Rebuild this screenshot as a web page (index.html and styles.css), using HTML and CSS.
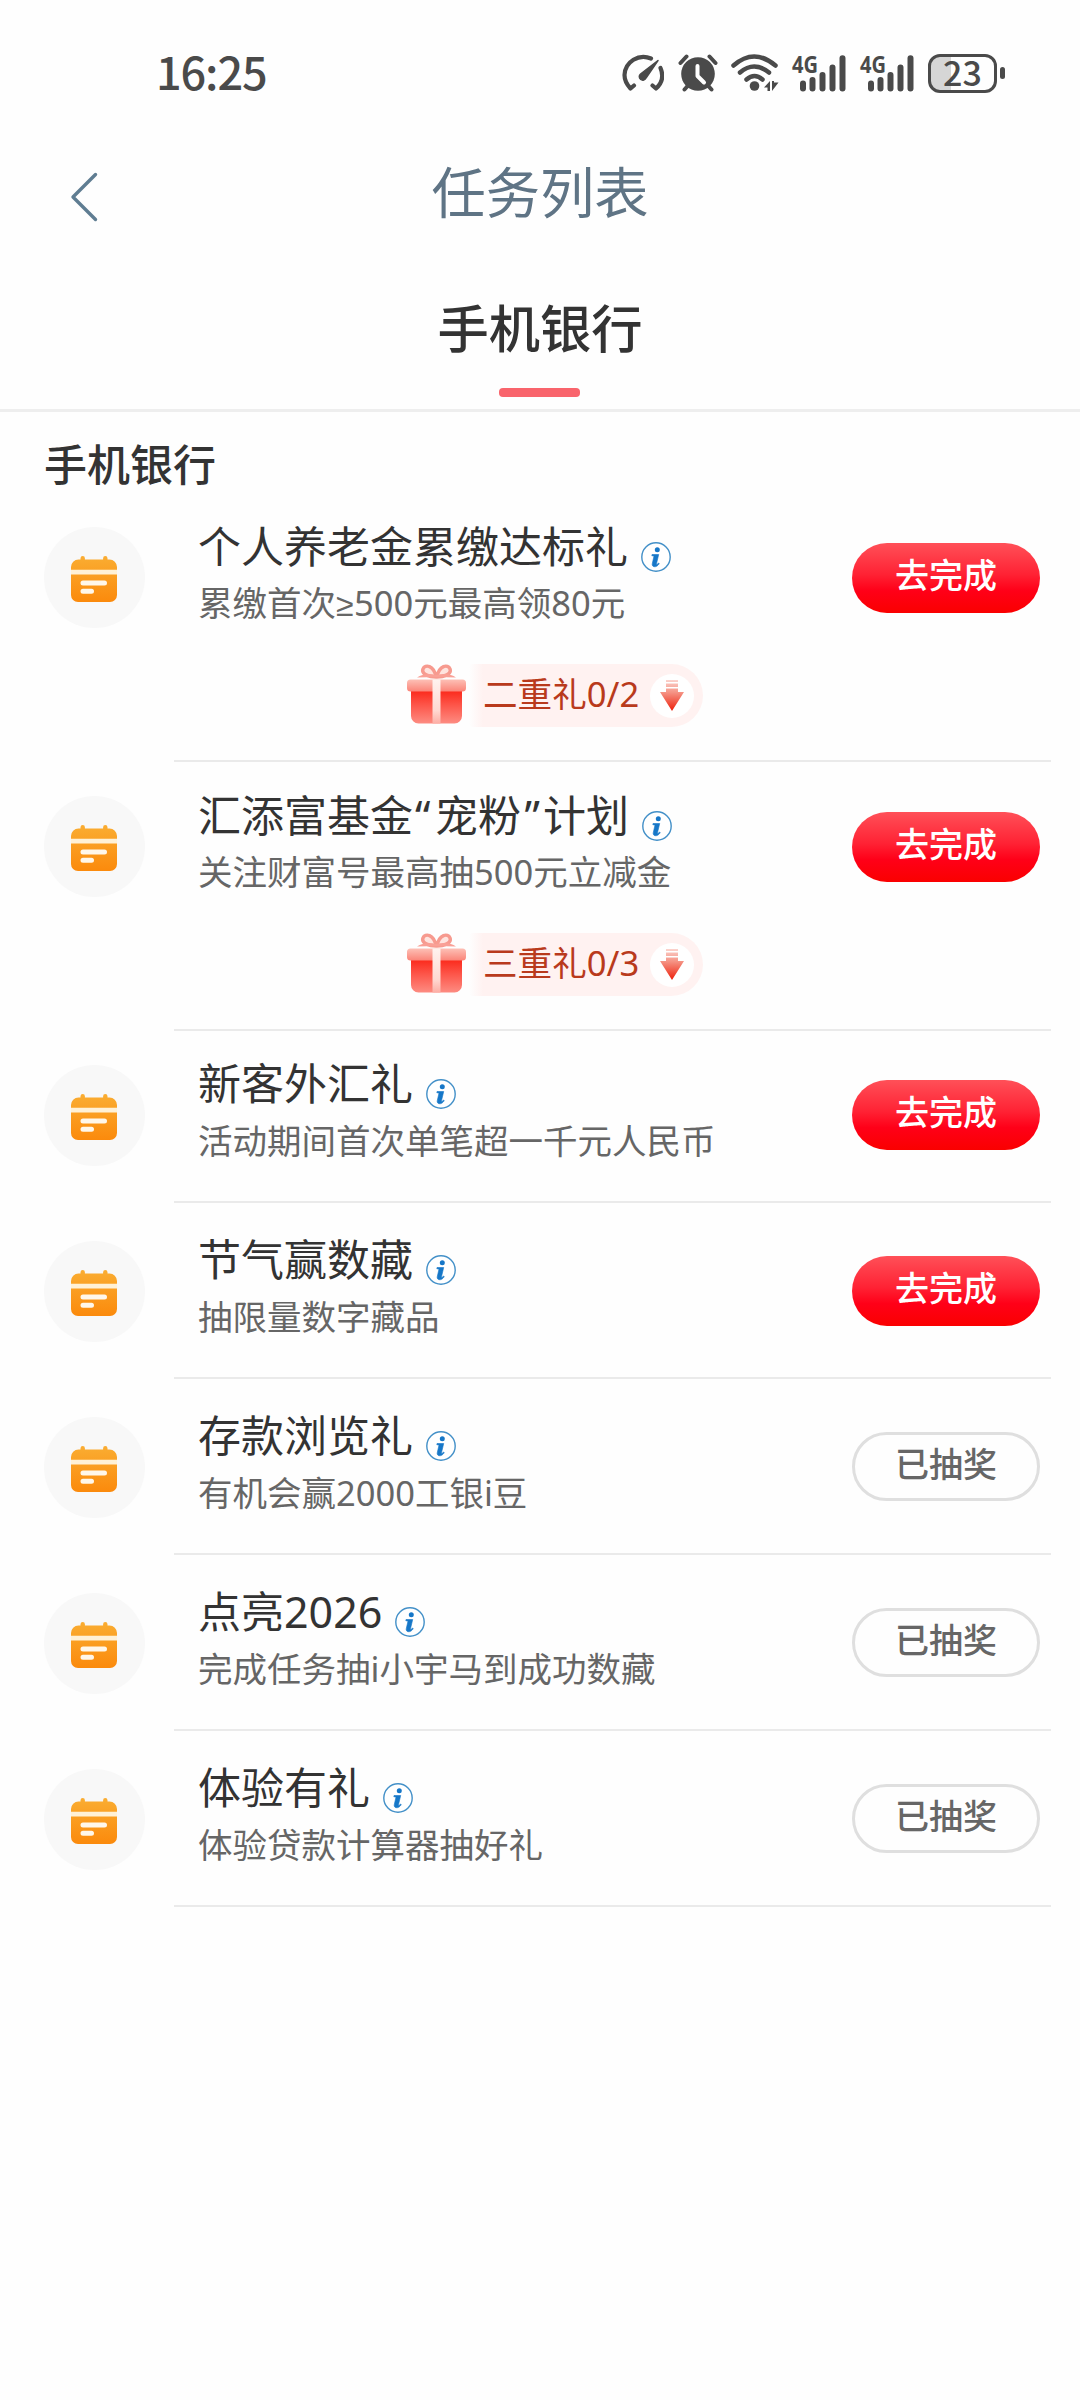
FILE: index.html
```html
<!DOCTYPE html>
<html lang="zh-CN">
<head>
<meta charset="utf-8">
<title>任务列表</title>
<link rel="stylesheet" href="styles.css">
</head>
<body>
<svg class="sprite" width="0" height="0" aria-hidden="true">
  <defs>
    <linearGradient id="orange" x1="0" y1="0" x2="0" y2="1"><stop offset="0" stop-color="#faad32"/><stop offset="1" stop-color="#fb8a0c"/></linearGradient>
    <linearGradient id="box" x1="0" y1="0" x2="0" y2="1"><stop offset="0" stop-color="#fb2416"/><stop offset=".45" stop-color="#fd5448"/><stop offset="1" stop-color="#fd8c82"/></linearGradient>
    <linearGradient id="lid" x1="0" y1="0" x2="0" y2="1"><stop offset="0" stop-color="#fdc0b6"/><stop offset="1" stop-color="#fb8478"/></linearGradient>
    <linearGradient id="ribbon" x1="0" y1="0" x2="0" y2="1"><stop offset="0" stop-color="#fff3ef"/><stop offset=".7" stop-color="#ffd9d2"/><stop offset="1" stop-color="#fdaea5"/></linearGradient>
    <linearGradient id="arrow" gradientUnits="userSpaceOnUse" x1="0" y1="0" x2="0" y2="31"><stop offset="0" stop-color="#fbd3cd"/><stop offset=".4" stop-color="#f59384"/><stop offset="1" stop-color="#ee1f0a"/></linearGradient>
  </defs>
  <symbol id="calendar" viewBox="0 0 46 46">
    <path d="M9.500 3.500V2.200a2.200 2.200 0 0 1 4.400 0V3.500h18.200V2.200a2.200 2.200 0 0 1 4.400 0V3.500h2A7.500 7.500 0 0 1 46 11V39a7 7 0 0 1-7 7H7a7 7 0 0 1-7-7V11A7.500 7.500 0 0 1 7.500 3.500Z" fill="url(#orange)"/>
    <path d="M0 13.800h46v4.600H0Z" fill="#fff1d6"/>
    <path d="M12 27h21.500M12 35.300h8.500" stroke="#fff7ea" stroke-width="5" stroke-linecap="round"/>
  </symbol>
  <symbol id="info" viewBox="0 0 30 30">
    <circle cx="15" cy="15" r="14.200" fill="#fff" stroke="#4390c8" stroke-width="1.400"/>
    <circle cx="16.300" cy="7.800" r="2.500" fill="#1677c8"/>
    <path d="M11 12.500h6.700l-2.200 9.300c-.2 1 .7 1 2-.8l.8.6c-1.700 2.600-3.300 3.300-4.900 3.100-1.900-.2-2.500-1.500-2.100-3.300l1.700-7.400-2.200-.3Z" fill="#1677c8" stroke="#1677c8" stroke-width=".6"/>
  </symbol>
  <symbol id="gift" viewBox="0 0 59 60">
    <path d="M29 13C22 13 14 10 16 5 18 0 27 1 29 13ZM30 13c7 0 15-3 13-8C41 0 32 1 30 13Z" fill="#ffe4df" stroke="#f79a8f" stroke-width="3.400"/>
    <path d="M29 13 10 13.500Q18 8 29 11 42 8 49 13.500Z" fill="#f9a096"/>
    <path d="M4 25h51v27a7.500 7.500 0 0 1-7.500 7.500h-36A7.500 7.500 0 0 1 4 52Z" fill="url(#box)"/>
    <rect x="0" y="15.500" width="59" height="12" rx="3.500" fill="url(#lid)"/>
    <path d="M25.500 15.500h8v44h-8Z" fill="url(#ribbon)"/>
  </symbol>
  <symbol id="down" viewBox="0 0 24 31">
    <path d="M6 0h12v2H6ZM6 3.500h12v3.500H6ZM6 8.500h12V12h6L12 31 0 12h6Z" fill="url(#arrow)"/>
  </symbol>
</svg>

<header class="status">
  <span class="clock">16:25</span>
  <div class="status-icons">
    <svg class="ic-gauge" viewBox="0 0 42 38" fill="none" stroke="#4a4a4a" stroke-width="4.200" stroke-linecap="round" stroke-linejoin="round"><path d="M29 4.500A19 19 0 0 0 2.500 21Q2.500 28 8.500 34.500L12 31.500"/><path d="M38.500 14Q43.500 26 34 34.500L30.500 31.500"/><path d="M36 6.500 24 24a3.500 3.500 0 1 1-5.500-4Z" fill="#4a4a4a" stroke-width="1.500"/></svg>
    <svg class="ic-alarm" viewBox="0 0 40 38"><circle cx="20" cy="20" r="16.800" fill="#4a4a4a"/><path d="m2.500 9 6-6.500M37.500 9l-6-6.500M6.500 35.500l4-4.500M33.500 35.500l-4-4.500" stroke="#4a4a4a" stroke-width="4" stroke-linecap="round"/><path d="M19.500 12v10l6.500 6.500" fill="none" stroke="#fff" stroke-width="4" stroke-linecap="round" stroke-linejoin="round"/></svg>
    <svg class="ic-wifi" viewBox="0 0 48 38" fill="none" stroke="#4a4a4a" stroke-width="4.500" stroke-linecap="round"><path d="M2.500 11.500Q23 -6.500 44.500 11.500M9 18.500Q23 6.500 38 18.500M15.500 25.500Q23.500 18.500 31.500 25.500"/><circle cx="23.500" cy="32" r="4.800" fill="#4a4a4a" stroke="none"/><path d="M33 33.500 39 27v10h-2.500v-3.500ZM41 27h2v1.500h4.500L41 37Z" fill="#4a4a4a" stroke="none"/></svg>
    <svg class="ic-signal" viewBox="0 0 54 37"><text x="0" y="17.500" class="net" textLength="26" lengthAdjust="spacingAndGlyphs">4G</text><path d="M11 28.500v5M20.500 25v8.500M30.500 20v13.500M40.500 12.500v21M50.500 3.200v30.300" stroke="#4a4a4a" stroke-width="6" stroke-linecap="round"/></svg>
    <svg class="ic-signal" viewBox="0 0 54 37"><text x="0" y="17.500" class="net" textLength="26" lengthAdjust="spacingAndGlyphs">4G</text><path d="M11 28.500v5M20.500 25v8.500M30.500 20v13.500M40.500 12.500v21M50.500 3.200v30.300" stroke="#4a4a4a" stroke-width="6" stroke-linecap="round"/></svg>
    <div class="battery"><span class="cell">23</span><i class="nub"></i></div>
  </div>
</header>

<nav class="titlebar">
  <svg class="back" viewBox="0 0 28 50"><path d="M25.500 2.500 3 25l22.500 22.500" fill="none" stroke="#5f7d92" stroke-width="3.400" stroke-linecap="round" stroke-linejoin="round"/></svg>
  <h1>任务列表</h1>
</nav>

<div class="tabs"><div class="tab">手机银行</div></div>

<main>
  <h2>手机银行</h2>
  <ul class="tasks">
    <li class="task task-bonus">
      <div class="badge"><svg><use href="#calendar"/></svg></div>
      <div class="body">
        <h3>个人养老金累缴达标礼<svg><use href="#info"/></svg></h3>
        <p>累缴首次<span class="math">≥</span>500元最高领80元</p>
      </div>
      <button class="btn go">去完成</button>
      <div class="bonus"><svg class="gift"><use href="#gift"/></svg><div class="pill">二重礼0/2<span class="drop"><svg><use href="#down"/></svg></span></div></div>
    </li>
    <li class="task task-bonus">
      <div class="badge"><svg><use href="#calendar"/></svg></div>
      <div class="body">
        <h3>汇添富基金<span class="quote">“</span>宠粉<span class="quote close">”</span>计划<svg><use href="#info"/></svg></h3>
        <p>关注财富号最高抽500元立减金</p>
      </div>
      <button class="btn go">去完成</button>
      <div class="bonus"><svg class="gift"><use href="#gift"/></svg><div class="pill">三重礼0/3<span class="drop"><svg><use href="#down"/></svg></span></div></div>
    </li>
    <li class="task">
      <div class="badge"><svg><use href="#calendar"/></svg></div>
      <div class="body">
        <h3>新客外汇礼<svg><use href="#info"/></svg></h3>
        <p>活动期间首次单笔超一千元人民币</p>
      </div>
      <button class="btn go">去完成</button>
    </li>
    <li class="task">
      <div class="badge"><svg><use href="#calendar"/></svg></div>
      <div class="body">
        <h3>节气赢数藏<svg><use href="#info"/></svg></h3>
        <p>抽限量数字藏品</p>
      </div>
      <button class="btn go">去完成</button>
    </li>
    <li class="task">
      <div class="badge"><svg><use href="#calendar"/></svg></div>
      <div class="body">
        <h3>存款浏览礼<svg><use href="#info"/></svg></h3>
        <p>有机会赢2000工银i豆</p>
      </div>
      <button class="btn done">已抽奖</button>
    </li>
    <li class="task">
      <div class="badge"><svg><use href="#calendar"/></svg></div>
      <div class="body">
        <h3>点亮2026<svg><use href="#info"/></svg></h3>
        <p>完成任务抽i小宇马到成功数藏</p>
      </div>
      <button class="btn done">已抽奖</button>
    </li>
    <li class="task">
      <div class="badge"><svg><use href="#calendar"/></svg></div>
      <div class="body">
        <h3>体验有礼<svg><use href="#info"/></svg></h3>
        <p>体验贷款计算器抽好礼</p>
      </div>
      <button class="btn done">已抽奖</button>
    </li>
  </ul>
</main>
</body>
</html>
```
FILE: styles.css
```css
* { box-sizing: border-box; margin: 0; padding: 0; }
body {
  width: 1080px;
  min-height: 2400px;
  background: #fefefe;
  color: #333;
  font-family: "Noto Sans", "Noto Sans CJK SC", sans-serif;
}
svg { display: block; flex: none; }
.sprite { position: absolute; }

/* status bar */
.status { display: flex; justify-content: space-between; height: 146px; padding: 0 75px 0 156px; align-items: center; }
.clock { padding-bottom: 4px; font: 500 45px/60px "Noto Sans CJK SC", sans-serif; letter-spacing: -1.100px; color: #4a4a4a; }
.status-icons { display: flex; align-items: center; }
.ic-gauge { width: 42px; height: 38px; margin-right: 14px; }
.ic-alarm { width: 40px; height: 38px; margin-right: 13px; }
.ic-wifi { width: 48px; height: 38px; margin-right: 13px; }
.ic-signal { width: 54px; height: 37px; margin-right: 14px; overflow: visible; }
.net { font: 700 24px "Noto Sans", sans-serif; fill: #4a4a4a; }
.battery { display: flex; align-items: center; gap: 3px; }
.cell {
  width: 69px; height: 39px; border: 3px solid #4a4a4a; border-radius: 12px;
  background: linear-gradient(90deg, #d6d6d6 20px, #fefefe 20px);
  font: 500 34px/30px "Noto Sans CJK SC", sans-serif; color: #4a4a4a; text-align: center;
}
.nub { width: 5px; height: 12px; border-radius: 3px; background: #4a4a4a; }

/* title bar and tab */
.titlebar { display: grid; grid-template-columns: 120px 1fr 120px; align-items: center; height: 100px; }
.back { width: 28px; height: 50px; margin: 1px 0 0 70px; }
h1 { padding-bottom: 8px; font-size: 54.300px; line-height: 70px; font-weight: 400; text-align: center; color: #5f7485; }
.tabs { display: flex; justify-content: center; height: 166px; border-bottom: 3px solid #eee; }
.tab {
  display: flex; flex-direction: column; justify-content: space-between; align-items: center;
  padding: 47px 0 12px; font-size: 51.300px; line-height: 70px; font-weight: 500;
}
.tab::after { content: ""; width: 81px; height: 9px; border-radius: 4px; background: #f9646c; }

/* list */
h2 { height: 81px; padding: 23px 0 0 44px; font-size: 43px; line-height: 60px; font-weight: 500; }
.tasks { list-style: none; }
.task {
  display: grid; grid-template-columns: 101px 1fr 188px; column-gap: 53px;
  height: 176px; padding: 38px 40px 0 44px; align-content: start;
  background: linear-gradient(#eaeaea, #eaeaea) 174px 100% / 877px 2px no-repeat;
}
.task-bonus { height: 269px; padding-top: 34px; }
.task-bonus + .task:not(.task-bonus) { height: 172px; padding-top: 34px; }
.task:not(.task-bonus) h3 { margin-top: -1px; margin-bottom: 12px; }
.badge { display: flex; align-items: center; justify-content: center; width: 101px; height: 101px; border-radius: 50%; background: #f8f8f8; }
.badge svg { width: 46px; height: 46px; margin: 3px 1px 0 0; }
.body { white-space: nowrap; width: 560px; }
h3 { display: flex; align-items: center; height: 40px; margin-bottom: 11px; font-size: 43px; line-height: 60px; font-weight: 400; }
h3 svg { width: 30px; height: 30px; margin: 19px 0 0 13px; }
.quote { width: 22px; padding-left: 2px; }
.close { padding: 0 3px 0 0; text-align: right; }
.math { display: inline-block; width: 18px; font-family: "Liberation Sans", sans-serif; font-size: 32px; line-height: 1; }
.body p { font-size: 34.500px; line-height: 50px; color: #666; }
.btn {
  width: 188px; height: 70px; margin-top: 16px; border: 0; border-radius: 35px;
  font: 500 34px/64px "Noto Sans", "Noto Sans CJK SC", sans-serif; text-align: center;
}
.task:not(.task-bonus) .btn { margin-top: 15px; }
.go { background: linear-gradient(#ff5058, #ff2234 45%, #ff0018 68%, #fa0000); color: #fff; padding-bottom: 6px; }
.done { height: 69px; background: #fefefe; border: 3px solid #dfdfdf; color: #666; line-height: 58px; padding-bottom: 5px; }

/* bonus strip */
.bonus { grid-column: 1 / -1; display: flex; align-items: center; margin: 33px 0 0 363px; }
.gift { width: 59px; height: 60px; }
.pill {
  display: flex; align-items: center; justify-content: space-between; width: 234px; height: 63px;
  margin: 3px 0 0 3px; padding: 0 9px 3px 14px; border-radius: 4px 32px 32px 4px;
  background: linear-gradient(90deg, #fefefe, #fff2f1 14px);
  font-size: 34.600px; line-height: 50px; color: #b93a1c;
}
.drop { display: flex; align-items: center; justify-content: center; width: 44px; height: 44px; margin-top: 3px; border-radius: 50%; background: #fff; }
.drop svg { width: 24px; height: 31px; }
```
